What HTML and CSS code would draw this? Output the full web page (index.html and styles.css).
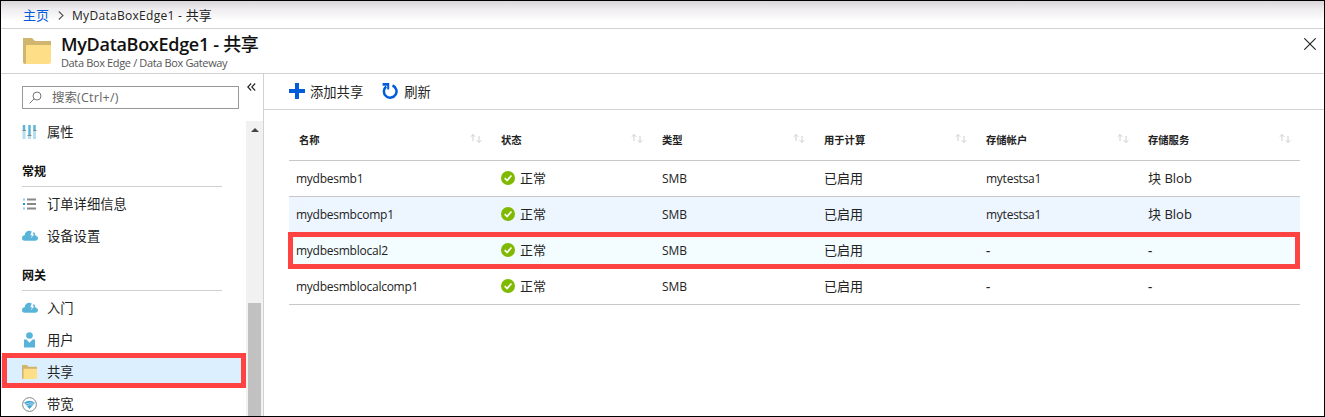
FILE: index.html
```html
<!DOCTYPE html>
<html lang="zh-CN">
<head>
<meta charset="utf-8">
<title>MyDataBoxEdge1 - 共享</title>
<link rel="stylesheet" href="styles.css">
</head>
<body>
<svg class="defs" width="0" height="0">
  <symbol id="folder" viewBox="0 0 28 26"><path fill="#d0b56e" d="M0 0h9l3 3h16v5H0z"/><path fill="#d0b56e" d="M0 4h4v22H2q-2 0-2-2z"/><path fill="#ffde88" d="M3 8q0-1 1-1h23q1 0 1 1v16q0 2-2 2H2q1 0 1-2z"/></symbol>
  <symbol id="cloud" viewBox="0 0 16 12"><path fill="#58b4d9" d="M2.800 10.800A2.800 2.800 0 0 1 0 8c0-1.600 1.200-2.700 2.700-2.800C3 2.500 4.800.8 7.200.8c1 0 1.900.2 2.600.7L8.300 5.300h1.900L8.600 8.600l3.800-4.300h-1.700l1.100-2.400c1.100.8 1.600 2 1.500 3.500C15 5.800 16 7 16 8.300c0 1.500-1.200 2.500-2.700 2.500z"/></symbol>
  <symbol id="ok" viewBox="0 0 14 14"><circle cx="7" cy="7" r="7" fill="#7fba00"/><path d="M3.700 7.200l2.400 2.300 4.300-5" fill="none" stroke="#fff" stroke-width="1.700"/></symbol>
  <symbol id="sort" viewBox="0 0 12 9"><path d="M3 7V.5M.7 2.800L3 .5l2.300 2.300M9 2v6.500M6.700 6.200L9 8.500l2.300-2.300" fill="none" stroke="#cfcfcf" stroke-width="1"/></symbol>
</svg>
<div class="frame">
  <div class="crumbs">
    <a class="home">主页</a>
    <svg class="chevron" width="6" height="9" viewBox="0 0 6 9"><path d="M.8.5l4.200 4-4.200 4" fill="none" stroke="#555" stroke-width="1.100"/></svg>
    <span class="here">MyDataBoxEdge1 - <span class="cjk">共享</span></span>
  </div>
  <header class="header">
    <svg class="bigfolder" width="28" height="26"><use href="#folder"/></svg>
    <div class="titles">
      <h1 class="title">MyDataBoxEdge1 - <span>共享</span></h1>
      <div class="subtitle">Data Box Edge / Data Box Gateway</div>
    </div>
    <svg class="close" width="12" height="12" viewBox="0 0 12 12"><path d="M.3.300l11.400 11.400M11.700.300L.3 11.700" stroke="#222" stroke-width="1.100"/></svg>
  </header>
  <div class="body">
    <aside class="side">
      <div class="searchrow">
        <div class="search">
          <svg width="13" height="13" viewBox="0 0 13 13"><circle cx="8" cy="5" r="4" fill="none" stroke="#777"/><path d="M5.200 7.800L.7 12.300" stroke="#777"/></svg>
          <span>搜索<span class="keys">(Ctrl+/)</span></span>
        </div>
        <svg class="collapse" width="9" height="8" viewBox="0 0 9 8"><path d="M4.200.5L.8 4l3.400 3.500M8.200.5L4.800 4l3.400 3.500" fill="none" stroke="#222" stroke-width="1.100"/></svg>
      </div>
      <div class="scroller">
        <nav class="nav">
          <div class="item"><svg width="15" height="16" viewBox="0 0 15 16"><path d="M2 1v14M7.500 1v14M12.500 1v14" stroke="#b4dff0" stroke-width="3"/><path d="M2 1v5M7.500 1v10M12.500 1v5" stroke="#58b4d9" stroke-width="2"/><path d="M.5 6.500h3.500M5.500 11.500h4M11 6.500h3.500" stroke="#888"/></svg><span>属性</span></div>
          <div class="group"><h2>常规</h2></div>
          <div class="item"><svg width="15" height="12" viewBox="0 0 15 12"><path d="M5 1.500h9M5 6h9M5 10.500h9" stroke="#888" stroke-width="2"/><path d="M1 1.500h2M1 10.500h2" stroke="#8fd0ea" stroke-width="2"/><path d="M1 6h2" stroke="#2493d1" stroke-width="2"/></svg><span>订单详细信息</span></div>
          <div class="item"><svg width="16" height="12"><use href="#cloud"/></svg><span>设备设置</span></div>
          <div class="group"><h2>网关</h2></div>
          <div class="item"><svg width="16" height="12"><use href="#cloud"/></svg><span>入门</span></div>
          <div class="item"><svg width="15" height="16" viewBox="0 0 15 16"><circle cx="7.500" cy="3.500" r="3.300" fill="#58b4d9"/><path fill="#58b4d9" d="M2 15.500V7.500h2.500l3 3.300 3-3.300H13v8z"/></svg><span>用户</span></div>
          <div class="item selected"><svg width="15" height="14"><use href="#folder"/></svg><span>共享</span><div class="mark"></div></div>
          <div class="item"><svg width="15" height="15" viewBox="0 0 15 15"><circle cx="7.500" cy="7.500" r="6.900" fill="#fff" stroke="#858585" stroke-width="1"/><path d="M2 5.800Q7.500 1.800 13 5.800L7.500 12z" fill="#3ca3d4"/><path d="M3 7.300q5-2.500 9-1M4.300 9q3.500-2 6.400-1" fill="none" stroke="#fff" stroke-width=".6"/></svg><span>带宽</span></div>
        </nav>
        <div class="bar"><svg width="8" height="4" viewBox="0 0 8 4"><path d="M0 4l4-4 4 4z" fill="#444"/></svg><div class="thumb"></div></div>
      </div>
    </aside>
    <main class="main">
      <div class="tools">
        <svg width="16" height="16" viewBox="0 0 16 16"><path d="M8 0v16M0 8h16" stroke="#015cda" stroke-width="4"/></svg>
        <span class="add">添加共享</span>
        <svg width="16" height="16" viewBox="0 0 16 16"><path d="M10.500 2.500A6.300 6.300 0 1 1 4.200 3.500" fill="none" stroke="#015cda" stroke-width="2.500"/><path d="M.6 0H7.200V6.500H5.200V2.800H.6z" fill="#015cda"/></svg>
        <span>刷新</span>
      </div>
      <div class="table">
        <div class="row head">
          <div class="first">名称<svg width="12" height="9"><use href="#sort"/></svg></div>
          <div>状态<svg width="12" height="9"><use href="#sort"/></svg></div>
          <div>类型<svg width="12" height="9"><use href="#sort"/></svg></div>
          <div>用于计算<svg width="12" height="9"><use href="#sort"/></svg></div>
          <div>存储帐户<svg width="12" height="9"><use href="#sort"/></svg></div>
          <div class="last">存储服务<svg width="12" height="9"><use href="#sort"/></svg></div>
        </div>
        <div class="row"><div>mydbesmb1</div><div class="zh"><svg width="14" height="14"><use href="#ok"/></svg>正常</div><div class="smb">SMB</div><div class="zh">已启用</div><div>mytestsa1</div><div class="zh">块 Blob</div></div>
        <div class="row hover"><div>mydbesmbcomp1</div><div class="zh"><svg width="14" height="14"><use href="#ok"/></svg>正常</div><div class="smb">SMB</div><div class="zh">已启用</div><div>mytestsa1</div><div class="zh">块 Blob</div></div>
        <div class="row active"><div>mydbesmblocal2</div><div class="zh"><svg width="14" height="14"><use href="#ok"/></svg>正常</div><div class="smb">SMB</div><div class="zh">已启用</div><div class="dash">-</div><div class="dash">-</div><div class="mark"></div></div>
        <div class="row"><div>mydbesmblocalcomp1</div><div class="zh"><svg width="14" height="14"><use href="#ok"/></svg>正常</div><div class="smb">SMB</div><div class="zh">已启用</div><div class="dash">-</div><div class="dash">-</div></div>
      </div>
    </main>
  </div>
</div>
</body>
</html>
```
FILE: styles.css
```css
* { box-sizing: border-box; }
body { margin: 0; overflow: hidden; background: #fff; color: #222; font: 12px/16px "Open Sans", "Noto Sans CJK SC", sans-serif; }
svg { display: block; flex: none; }
.defs { position: absolute; }
h1, h2 { margin: 0; }
.frame { display: flex; flex-direction: column; width: 1325px; height: 417px; border: 1px solid #000; overflow: hidden; }
.crumbs { display: flex; align-items: center; height: 28px; padding: 1px 0 0 22px; border-bottom: 1px solid #d2d2d2; background: linear-gradient(#d9d6d9, #eeecee 8px, #fff 20px); white-space: nowrap; }
.home { width: 26px; color: #015cda; font-size: 13px; }
.chevron { margin: 0 8px 0 9px; }
.here { font-size: 12px; letter-spacing: .3px; }
.cjk { font-size: 13px; letter-spacing: 0; }
.header { display: flex; height: 45px; padding-left: 22px; border-bottom: 1px solid #d2d2d2; }
.bigfolder { margin-top: 9px; }
.titles { flex: 1; padding: 4px 0 0 10px; white-space: nowrap; }
.title { font-size: 18px; line-height: 23px; font-weight: 600; color: #111; letter-spacing: -.3px; }
.title span { font-weight: 500; }
.subtitle { font-size: 11px; line-height: 14px; letter-spacing: -.36px; color: #555; }
.close { margin: 9px 8px 0 0; }
.body { display: flex; flex: 1; min-height: 0; }
.side { display: flex; flex-direction: column; width: 263px; border-right: 1px solid #d2d2d2; }
.searchrow { display: flex; flex: none; height: 47px; padding: 12px 0 0 21px; }
.search { display: flex; align-items: center; width: 217px; height: 23px; padding-left: 6px; gap: 10px; border: 1px solid #999; color: #666; font-size: 12.500px; }
.keys { letter-spacing: .25px; }
.collapse { margin: -3px 0 0 8px; }
.scroller { display: flex; flex: 1; min-height: 0; }
.nav { width: 245px; margin-top: -5px; }
.item { display: flex; align-items: center; position: relative; height: 32px; padding-left: 21px; font-size: 13.300px; color: #222; }
.item svg { margin-right: 10px; }
.item svg[width="16"] { margin-right: 9px; }
.selected { background: #dceffe; }
.mark { position: absolute; border: 5px solid #ff4242; }
.selected .mark { left: 1px; right: 0; top: -3px; height: 35px; }
.group { height: 40px; padding: 16px 0 0 21px; }
.group h2 { width: 200px; height: 23px; border-bottom: 1px solid #d0d0d0; font-size: 12px; line-height: 16px; color: #111; }
.bar { display: flex; flex-direction: column; align-items: center; width: 17px; padding-top: 7px; background: #f1f1f1; }
.thumb { width: 13px; height: 120px; margin-top: 171px; background: #c1c1c1; flex: none; }
.main { flex: 1; min-width: 0; }
.tools { display: flex; align-items: center; height: 36px; padding: 0 0 1px 25px; border-bottom: 1px solid #d2d2d2; font-size: 13.300px; }
.tools span { margin-left: 5px; padding-top: 2px; }
.tools .add { margin-right: 19px; }
.tools .add + svg + span { margin-left: 6px; }
.table { width: 1011px; margin-left: 25px; }
.row { display: grid; position: relative; grid-template-columns: 205px 161px 162px 162px 162px 159px; align-items: center; height: 36px; border-bottom: 1px solid #c8c8c8; white-space: nowrap; letter-spacing: -.25px; }
.row > div:not(.mark) { display: flex; align-items: center; padding-left: 7px; }
.row > .zh:not(.mark) { padding-bottom: 2px; font-size: 13px; letter-spacing: 0; }
.row .smb { letter-spacing: 0; }
.zh svg { margin-right: 5px; }
.row > .dash:not(.mark) { padding-bottom: 2px; font-weight: 600; font-size: 13px; }
.head { height: 51px; padding-top: 10px; font-size: 10.300px; font-weight: 600; letter-spacing: 0; }
.head > div:not(.mark) { justify-content: space-between; padding-right: 12px; }
.head > .first:not(.mark) { padding-left: 10px; }
.head > .last:not(.mark) { padding-right: 9px; }
.head svg { margin-top: -3px; }
.hover { background: #edf5ff; }
.active { background: #f3fcff; }
.active .mark { left: -1px; top: -1px; width: 1012px; height: 37px; }
```
